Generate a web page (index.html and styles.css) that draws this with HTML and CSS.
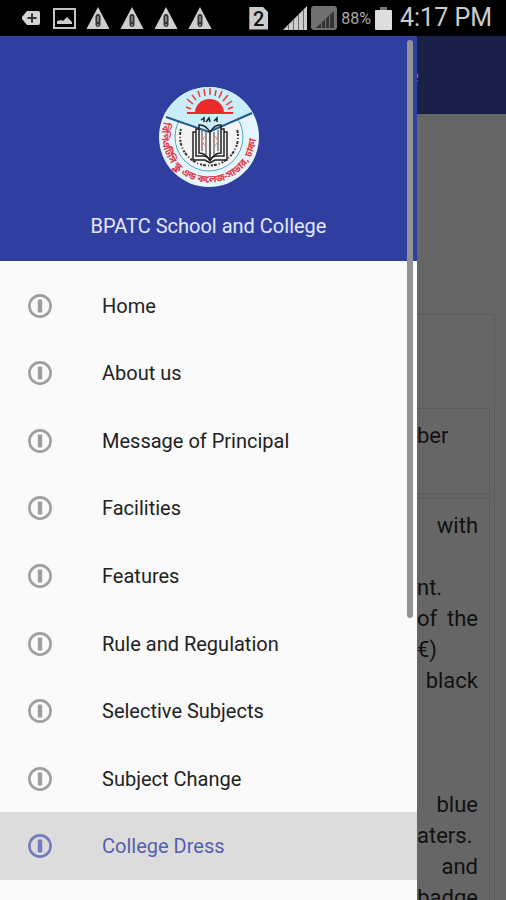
FILE: index.html
```html
<!DOCTYPE html>
<html lang="en">

<head>
    <meta charset="utf-8">
    <meta content="width=device-width, initial-scale=1" name="viewport">
    <title>BPATC School and College</title>
    <link rel="stylesheet" href="styles.css">
</head>

<body>
    <!-- shared icons -->
    <svg class="defs" width="0" height="0">
        <symbol id="info" viewBox="0 0 24 24">
            <circle cx="12" cy="12" r="10.6" fill="none" stroke="currentColor" stroke-width="2.6"/>
            <rect x="9.8" y="5.5" width="4.4" height="13" rx="1" fill="currentColor"/>
        </symbol>
        <symbol id="warn" viewBox="0 0 24 24">
            <path d="M12 1L23.5 23H.5z" fill="#cfcfcf"/>
            <path d="M12 8q2.500 0 2.500 3v7q0 3-2.500 3t-2.500-3v-7q0-3 2.500-3z" fill="#333"/>
            <path d="M12 10v6M12 18v2" stroke="#999" stroke-width="1.4"/>
        </symbol>
    </svg>

    <!-- status bar -->
    <div class="statusbar">
        <div class="notices">
            <svg class="tag" viewBox="0 0 18 16">
                <path d="M5 1h11q2 0 2 2v10q0 2-2 2H5L0 9V7z" fill="#d4d4d4"/>
                <path d="M10 3.5v9M5.5 8h9" stroke="#333" stroke-width="2"/>
            </svg>
            <svg class="photo" viewBox="0 0 23 21">
                <path d="M1 1h21v19H1z" fill="none" stroke="#c4c4c4" stroke-width="2"/>
                <path d="M4 16v-3l4-1 2 1 4-4 5 5v2z" fill="#ccc"/>
            </svg>
            <svg class="warn"><use href="#warn"/></svg>
            <svg class="warn"><use href="#warn"/></svg>
            <svg class="warn"><use href="#warn"/></svg>
            <svg class="warn"><use href="#warn"/></svg>
        </div>
        <div class="system">
            <div class="sim">2</div>
            <svg class="signal" viewBox="0 0 24 24">
                <path d="M0 24L24 0v24z" fill="#ccc"/>
                <path d="M5.5 18v6M10.5 13v11M15.5 8v16M20.5 3v21" stroke="#666" stroke-width="1"/>
            </svg>
            <svg class="signal-off" viewBox="0 0 26 24">
                <rect width="26" height="24" rx="3" fill="#707070"/>
                <path d="M5 22L23 5v17z" fill="#333"/>
                <path d="M10.5 17v5M14.5 13v9M18.5 10v12" stroke="#707070"/>
            </svg>
            <span class="percent">88%</span>
            <svg class="battery" viewBox="0 0 17 23">
                <path d="M5 0h7v3H5z" fill="#777"/>
                <rect y="3" width="17" height="20" rx="1" fill="#ddd"/>
            </svg>
            <span class="clock">4:17 PM</span>
        </div>
    </div>

    <div class="screen">
        <!-- drawer -->
        <aside class="drawer">
            <header class="drawer-header">
                <svg class="logo" viewBox="0 0 102 102">
                    <defs>
                        <clipPath id="disc"><circle cx="51" cy="51" r="50"/></clipPath>
                        <path id="ring" d="M6 36A47 47 0 1 0 96 36"/>
                    </defs>
                    <circle cx="51" cy="51" r="50" fill="#e4f5fb"/>
                    <g clip-path="url(#disc)">
                        <circle cx="51" cy="51" r="34" fill="#f5f5f5" stroke="#47a8cf"/>
                        <path d="M0 28V0h102v26L51 45z" fill="#c9eefa"/>
                        <path d="M8 31L51 46 94 27" fill="none" stroke="#235c8e" stroke-width="2"/>
                    </g>
                    <path d="M37 27a14.500 14 0 0 1 29 0z" fill="#ed2929"/>
                    <path d="M29 27h46" stroke="#ed2929" stroke-width="2"/>
                    <path d="M35 18l-6-5M38 14l-4-5M42 11l-2-6M47 10l-1-7M52 9V2M57 10l1-6M61 12l3-7M65 15l5-6M68 19l6-4M33 23l-5-2M70 23l5-2" stroke="#ed3b32" stroke-width="1.500"/>
                    <!-- open book -->
                    <g fill="none" stroke="#222" stroke-width="1.500">
                        <path d="M52 75V46q-5-8-11-7v28q7 0 11 8zM52 75V46q5-8 11-7v28q-7 0-11 8z"/>
                        <path d="M41 43h-3v27h8q5 1 6 5M63 43h3v27h-8q-5 1-6 5"/>
                        <path d="M38 46h-3v28h12l5 3 5-3h12V46h-3"/>
                        <path d="M44 44v21M48 46v23M56 46v23M60 44v21" stroke="#777"/>
                        <path d="M43 34l3-2v4M48 36l3-4 1 4M56 35l3-3v4"/>
                    </g>
                    <path d="M47 50l-3 5 3 5M57 50l3 5-3 5" fill="none" stroke="#ef8b84"/>
                    <path d="M23 43A29 29 0 1 0 79 43" fill="none" stroke="#333" stroke-width="2" stroke-dasharray="2 1 3 2 1 2"/>
                    <text class="logo-text"><textPath href="#ring">বিপিএটিসি স্কুল এন্ড কলেজ-সাভার, ঢাকা</textPath></text>
                </svg>
                <h1>BPATC School and College</h1>
            </header>
            <nav>
                <ul class="menu">
                    <li><a href="#"><svg><use href="#info"/></svg>Home</a></li>
                    <li><a href="#"><svg><use href="#info"/></svg>About us</a></li>
                    <li><a href="#"><svg><use href="#info"/></svg>Message of Principal</a></li>
                    <li><a href="#"><svg><use href="#info"/></svg>Facilities</a></li>
                    <li><a href="#"><svg><use href="#info"/></svg>Features</a></li>
                    <li><a href="#"><svg><use href="#info"/></svg>Rule and Regulation</a></li>
                    <li><a href="#"><svg><use href="#info"/></svg>Selective Subjects</a></li>
                    <li><a href="#"><svg><use href="#info"/></svg>Subject Change</a></li>
                    <li class="selected"><a href="#"><svg><use href="#info"/></svg>College Dress</a></li>
                </ul>
            </nav>
            <div class="scrollbar"></div>
        </aside>

        <!-- dimmed page -->
        <main class="page">
            <div class="appbar"><span>e</span></div>
            <div class="sheet">
                <div class="sheet-head"></div>
                <div class="cell number">ber</div>
                <div class="cell">
                    <p class="end">with</p>
                    <p></p>
                    <p>nt.</p>
                    <p class="spread">of the</p>
                    <p>€)</p>
                    <p class="end">black</p>
                    <p></p>
                    <p></p>
                    <p></p>
                    <p class="end">blue</p>
                    <p>aters.</p>
                    <p class="end">and</p>
                    <p class="end">badge</p>
                </div>
            </div>
        </main>
    </div>
</body>

</html>
```
FILE: styles.css
```css
* {
    box-sizing: border-box;
}

body {
    margin: 0;
    height: 100vh;
    display: flex;
    flex-direction: column;
    overflow: hidden;
    background-color: #000;
    font-family: Roboto, "Noto Sans", sans-serif;
}

.defs {
    position: absolute;
}

/* status bar */

.statusbar {
    display: flex;
    flex: none;
    justify-content: space-between;
    align-items: center;
    height: 36px;
    padding: 0 14px 0 22px;
    color: #ccc;
}

.notices,
.system {
    display: flex;
    align-items: center;
}

.notices {
    gap: 10px;
}

.tag {
    width: 18px;
    height: 16px;
    margin-right: 3px;
}

.photo {
    width: 23px;
    height: 21px;
}

.warn {
    width: 24px;
    height: 24px;
}

.system {
    gap: 4px;
}

.sim {
    width: 19px;
    height: 23px;
    margin-right: 11px;
    background-color: #ccc;
    color: #111;
    font-size: 20px;
    font-weight: 500;
    line-height: 24px;
    text-align: center;
    clip-path: polygon(0 0, 70% 0, 100% 25%, 100% 100%, 0 100%);
}

.signal {
    width: 24px;
    height: 24px;
}

.signal-off {
    width: 26px;
    height: 24px;
}

.percent {
    font-size: 16px;
    color: #aaa;
}

.battery {
    width: 17px;
    height: 23px;
}

.clock {
    margin-left: 4px;
    font-size: 25px;
    line-height: 36px;
}

/* layout */

.screen {
    display: flex;
    flex: 1;
    min-height: 0;
}

/* drawer */

.drawer {
    position: relative;
    flex: 1;
    overflow: hidden;
    background-color: #fafafa;
}

.drawer-header {
    display: flex;
    flex-direction: column;
    align-items: center;
    gap: 24px;
    height: 225px;
    padding-top: 50px;
    background-color: #303f9f;
}

.logo {
    width: 102px;
    height: 102px;
}

.logo-text {
    fill: #e03c4c;
    font-family: "Noto Sans Bengali", "Noto Sans", sans-serif;
    font-size: 10px;
    font-weight: 700;
}

.drawer-header h1 {
    margin: 0;
    color: #e3e8fb;
    font-size: 20px;
    font-weight: 400;
    line-height: 28px;
}

.menu {
    display: grid;
    grid-auto-rows: 1fr;
    height: 608px;
    margin: 11px 0 0;
    padding: 0;
    list-style-type: none;
}

.menu a {
    display: flex;
    align-items: center;
    gap: 50px;
    height: 100%;
    padding-left: 28px;
    color: #222;
    font-size: 20px;
    text-decoration: none;
}

.menu svg {
    width: 24px;
    height: 24px;
    color: #9e9e9e;
}

.menu .selected {
    background-color: #dcdcdc;
}

.menu .selected a {
    color: #5360b0;
}

.menu .selected svg {
    color: #737dbd;
}

.scrollbar {
    position: absolute;
    top: 4px;
    right: 4px;
    width: 6px;
    height: 578px;
    border-radius: 3px;
    background-color: #929297;
}

/* page behind the drawer */

.page {
    width: 89px;
    overflow: hidden;
    background-color: #666;
    color: #111;
    font-size: 22px;
    line-height: 31px;
}

.appbar {
    display: flex;
    align-items: center;
    height: 78px;
    background-color: #1a2048;
    color: #777b91;
}

.appbar span {
    display: flex;
    justify-content: flex-end;
    width: 2px;
    overflow: hidden;
}

.sheet {
    margin: 200px 11px 0 0;
    padding-right: 4px;
    border: solid #5c5c5c;
    border-width: 1px 1px 0 0;
}

.sheet-head {
    height: 93px;
}

.cell {
    margin-bottom: 4px;
    padding: 11px 11px 0 0;
    border: solid #5c5c5c;
    border-width: 1px 1px 1px 0;
}

.number {
    height: 86px;
}

.cell p {
    height: 31px;
    margin: 0;
}

.end {
    text-align: right;
}

.spread {
    text-align-last: justify;
}
```
